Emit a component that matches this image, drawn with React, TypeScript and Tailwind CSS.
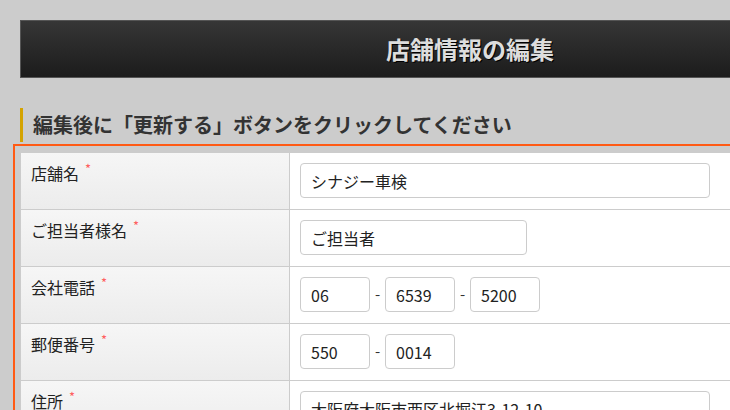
const font = { fontFamily: '"Noto Sans CJK JP", "Noto Sans", sans-serif' }

type Row = { label: string; fields: { value: string; width: string }[] }

const rows: Row[] = [
  { label: "店舗名", fields: [{ value: "シナジー車検", width: "w-[410px]" }] },
  { label: "ご担当者様名", fields: [{ value: "ご担当者", width: "w-[227px]" }] },
  {
    label: "会社電話",
    fields: [
      { value: "06", width: "w-[70px]" },
      { value: "6539", width: "w-[70px]" },
      { value: "5200", width: "w-[70px]" },
    ],
  },
  {
    label: "郵便番号",
    fields: [
      { value: "550", width: "w-[70px]" },
      { value: "0014", width: "w-[70px]" },
    ],
  },
  { label: "住所", fields: [{ value: "大阪府大阪市西区北堀江3-12-10", width: "w-[410px]" }] },
]

export default function App() {
  return (
    <div className="h-[410px] w-[730px] overflow-hidden bg-[#cccccc]" style={font}>
      <div className="w-[1000px] pt-5">
        {/* page title bar */}
        <div className="ml-5 flex h-[58px] w-[900px] items-center justify-center border border-[#555555] bg-gradient-to-b from-[#363636] to-[#1c1c1c]">
          <h1 className="text-[24px] font-bold text-[#dddddd] [text-shadow:1px_1px_0_#000]">店舗情報の編集</h1>
        </div>

        <h2 className="ml-5 mt-[30px] flex h-[34px] items-center border-l-[3px] border-[#d4a300] pl-[10px] text-[20px] font-bold text-[#333333]">
          編集後に「更新する」ボタンをクリックしてください
        </h2>

        {/* form */}
        <div className="ml-[13px] mt-[2px] w-[920px] border-2 border-[#ff5a14] px-[5px] pt-[6px]">
          <div className="border-x border-t border-[#cccccc]">
            {rows.map((row) => (
              <div key={row.label} className="flex h-[57px] border-b border-[#cccccc]">
                <div className="w-[269px] shrink-0 border-r border-[#cccccc] bg-gradient-to-b from-[#f6f6f6] to-[#ececec] pl-[10px] pt-[8px] text-[16px] leading-[24px] text-[#222222]">
                  {row.label}
                  <span className="relative -top-[6px] ml-[6px] text-[13px] text-[#ff5f5f]">*</span>
                </div>
                <div className="flex flex-1 items-start bg-white pl-[10px] pt-[10px]">
                  {row.fields.map((f, i) => (
                    <div key={i} className="flex items-center">
                      {i > 0 && <span className="w-[15px] text-center text-[15px] text-[#333333]">-</span>}
                      <div
                        className={`${f.width} flex h-[35px] items-center rounded-[4px] border border-[#cccccc] bg-white pl-[10px] text-[16px] text-[#222222]`}
                      >
                        {f.value}
                      </div>
                    </div>
                  ))}
                </div>
              </div>
            ))}
          </div>
        </div>
      </div>
    </div>
  )
}
